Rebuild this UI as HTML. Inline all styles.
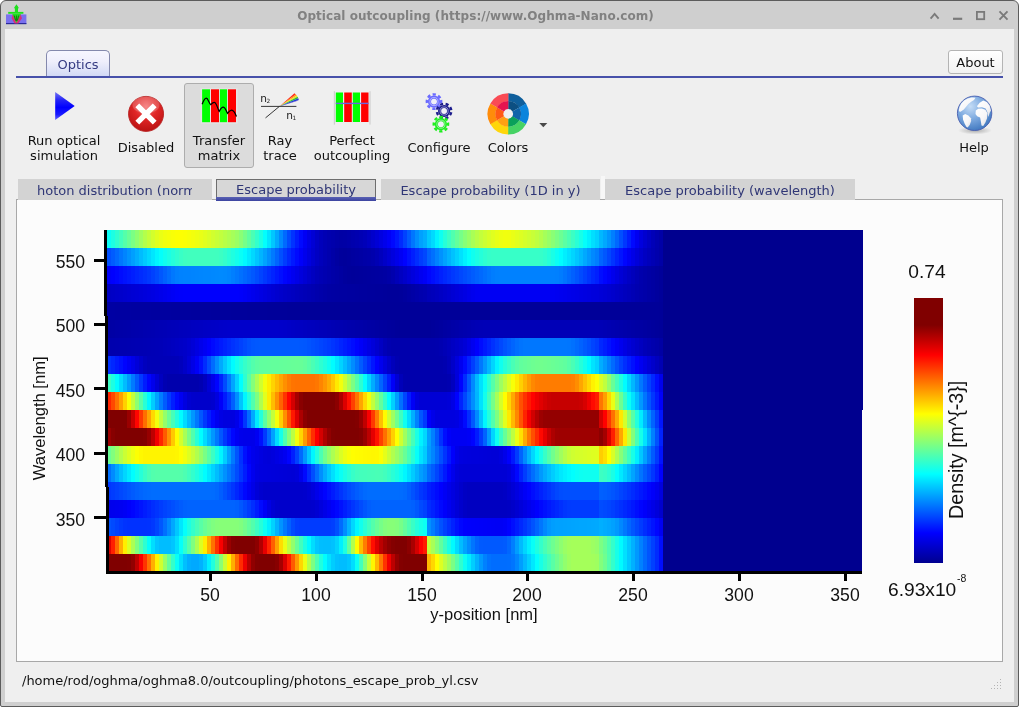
<!DOCTYPE html>
<html><head><meta charset="utf-8"><title>Optical outcoupling</title>
<style>
html,body{margin:0;padding:0}
body{width:1019px;height:707px;position:relative;overflow:hidden;background:#fff;font-family:"DejaVu Sans","Liberation Sans",sans-serif;font-size:13px;color:#111}
.abs{position:absolute}
#win{position:absolute;left:0;top:0;width:1017px;height:705px;border:1px solid #5c5c5c;border-radius:6px 6px 2px 2px;background:#cfcfcf;overflow:hidden}
#content{position:absolute;left:5px;top:29px;width:1009px;height:673px;background:#efefef}
#title{position:absolute;left:0;width:951px;top:8px;letter-spacing:0.05px;text-align:center;font-weight:bold;font-size:12px;color:#818181;line-height:16px;white-space:nowrap}
.tbl{position:absolute;text-align:center;line-height:15px;white-space:nowrap;color:#111}
.tab{position:absolute;top:179px;height:21px;background:#d3d3d3;color:#2f3676;line-height:23px;white-space:nowrap;overflow:hidden}
.hr{position:absolute;left:107px;width:756px;height:18px}
.pl{position:absolute;font-family:"Liberation Sans",sans-serif;color:#111;white-space:nowrap;line-height:1}
.tk{position:absolute;background:#000}
#all{position:absolute;left:0;top:0;width:1019px;height:707px;will-change:transform}
</style></head><body><div id="all">
<div id="win"></div>
<div class="abs" style="left:5px;top:29px;width:1009px;height:673px;background:#efefef"></div>
<!-- app icon -->
<svg class="abs" style="left:4px;top:2px" width="26" height="26" viewBox="0 0 26 26">
<rect x="2" y="12.4" width="20.4" height="9.6" fill="#7a70ee"/>
<rect x="2" y="21" width="20.4" height="1.2" fill="#2a2a9a"/>
<path d="M8.6 12.6 L7.6 16.2 L10.5 21.6 L14.3 21.6 L18 16.2 L16.6 12.6 Z" fill="#d8307a"/>
<path d="M8.4 11.9 L16.8 11.9 L12.4 20.9 Z" fill="#1ee01e"/>
<path d="M10.2 13.5 L11.6 18.5 M12.4 13.5 L12.4 19 M14.6 13.5 L13.4 18.5" stroke="#0a5a0a" stroke-width="0.8" fill="none"/>
<rect x="4.2" y="9.9" width="15.2" height="1.9" fill="#1ee01e"/>
<rect x="10.9" y="4.5" width="3.1" height="6" fill="#1ee01e"/>
<path d="M9.9 6.2 L12.45 2.2 L15 6.2 Z" fill="#1ee01e"/>
</svg>
<div id="title">Optical outcoupling (https://www.Oghma-Nano.com)</div>
<!-- window buttons -->
<svg class="abs" style="left:925px;top:5px" width="90" height="20" viewBox="0 0 90 20">
<g fill="none" stroke="#7a7a7a" stroke-width="1.9">
<path d="M5.6 13.6 L9.6 9 L13.6 13.6"/>
<path d="M28 13.8 L37.2 13.8" stroke-width="2.2"/>
<rect x="51.9" y="6.9" width="7.3" height="7.3" stroke-width="1.8"/>
<path d="M74.5 6.4 L82.5 14.6 M82.5 6.4 L74.5 14.6"/>
</g></svg>
<!-- ribbon tab -->
<div class="abs" style="left:46px;top:50px;width:62px;height:26px;border:1px solid #8489ad;border-bottom:none;border-radius:5px 5px 0 0;background:linear-gradient(#f6f6ff 0%,#efeffc 40%,#d0d8f4 100%);color:#353b82;text-align:center;line-height:27px">Optics</div>
<div class="abs" style="left:16px;top:76px;width:987px;height:2px;background:#4751aa"></div>
<!-- About -->
<div class="abs" style="left:948px;top:50px;width:53px;height:22px;border:1px solid #b4b4b4;border-radius:3px;background:linear-gradient(#ffffff,#f1f1f1);text-align:center;line-height:23px;color:#111">About</div>
<!-- toolbar -->
<svg class="abs" style="left:50px;top:86px" width="30" height="40" viewBox="0 0 30 40">
<defs><linearGradient id="pg" x1="0" y1="0" x2="0" y2="1"><stop offset="0" stop-color="#7474f2"/><stop offset="0.3" stop-color="#2222f6"/><stop offset="0.55" stop-color="#0000ff"/><stop offset="0.8" stop-color="#1a1aff"/><stop offset="1" stop-color="#6464ff"/></linearGradient></defs>
<path d="M5.2 5.9 L24.7 20 L5.2 34.1 Z" fill="url(#pg)"/></svg>
<div class="tbl" style="left:14px;top:133px;width:100px">Run optical<br>simulation</div>
<svg class="abs" style="left:124px;top:92px" width="44" height="44" viewBox="0 0 44 44">
<defs><radialGradient id="rg" cx="0.5" cy="0.3" r="0.75"><stop offset="0" stop-color="#f46a6a"/><stop offset="0.45" stop-color="#e02626"/><stop offset="1" stop-color="#b40f0f"/></radialGradient></defs>
<circle cx="22.05" cy="21.9" r="17.5" fill="url(#rg)" stroke="#b82222" stroke-width="0.9"/>
<ellipse cx="22" cy="13" rx="13.5" ry="8.5" fill="#ffffff" opacity="0.2"/>
<path d="M13.3 13.3 L30.7 30.7 M30.7 13.3 L13.3 30.7" stroke="#fff" stroke-width="5.4" fill="none"/></svg>
<div class="tbl" style="left:96px;top:140px;width:100px">Disabled</div>
<div class="abs" style="left:184px;top:83px;width:68px;height:83px;border:1px solid #adadad;border-radius:3px;background:#dcdcdc"></div>
<svg class="abs" style="left:198px;top:86px" width="42" height="40" viewBox="0 0 42 40">
<rect x="2.6" y="2.2" width="37" height="35.4" fill="#e4e4e4"/>
<rect x="4.1" y="3.3" width="7.9" height="32.9" fill="#00ff00"/><rect x="13" y="3.3" width="8" height="32.9" fill="#ff0000"/>
<rect x="21.9" y="3.3" width="7.2" height="32.9" fill="#00ff00"/><rect x="30" y="3.3" width="8" height="32.9" fill="#ff0000"/>
<path d="M4.1 18.3 C5.6 14.5 6.6 12.2 8.3 12.2 C10.2 12.2 10.8 17.6 12.8 18.7 C14 17.4 15 16.4 16.3 16.4 C18.6 16.4 19.6 23 21.2 25.4 C22.6 22.6 23.6 21.1 25.2 21.1 C27.4 21.1 28.2 25.6 29.6 27.4 C31 25.2 32.2 24.1 33.6 24.1 C36 24.1 37.4 27.6 38.5 30.5" fill="none" stroke="#000" stroke-width="1.2"/></svg>
<div class="tbl" style="left:169px;top:133px;width:100px">Transfer<br>matrix</div>
<!-- ray trace -->
<svg class="abs" style="left:256px;top:88px" width="46" height="36" viewBox="0 0 46 36">
<path d="M23.4 18.4 L38.5 5.2 L39.8 6.4 Z" fill="#ff2a1a"/><path d="M23.4 18.4 L39.8 6.4 L40.8 7.6 Z" fill="#ff9a10"/><path d="M23.4 18.4 L40.8 7.6 L41.6 8.8 Z" fill="#f0e61a"/><path d="M23.4 18.4 L41.6 8.8 L42.3 10.2 Z" fill="#2ec22e"/><path d="M23.4 18.4 L42.3 10.2 L42.8 12 Z" fill="#2040d8"/><path d="M23.4 18.4 L42.8 12 L41 13 Z" fill="#5a30c0"/>
<path d="M5 18.4 L40.4 18.4" stroke="#222" stroke-width="0.9"/><path d="M9.5 29.9 L23.4 18.4" stroke="#222" stroke-width="0.9"/>
<text x="4.3" y="14.4" font-family="DejaVu Sans,sans-serif" font-size="10.6" fill="#222">n</text><text x="10.4" y="14.9" font-family="DejaVu Sans,sans-serif" font-size="5.8" fill="#222">2</text>
<text x="30.2" y="30.9" font-family="DejaVu Sans,sans-serif" font-size="10.6" fill="#222">n</text><text x="36.6" y="31.6" font-family="DejaVu Sans,sans-serif" font-size="5.8" fill="#222">1</text></svg>
<div class="tbl" style="left:230px;top:133px;width:100px">Ray<br>trace</div>
<!-- perfect outcoupling -->
<svg class="abs" style="left:332px;top:88px" width="42" height="40" viewBox="0 0 42 40">
<rect x="1.8" y="3.2" width="1.2" height="33.4" fill="#cfcfcf"/><rect x="37.4" y="3.2" width="1.2" height="33.4" fill="#cfcfcf"/>
<rect x="3.8" y="4.5" width="7.2" height="29.5" fill="#00ff00"/><rect x="12.2" y="4.5" width="7.6" height="29.5" fill="#ff0000"/>
<rect x="20.8" y="4.5" width="7.2" height="29.5" fill="#00ff00"/><rect x="29.1" y="4.5" width="7.4" height="29.5" fill="#ff0000"/>
<rect x="3.8" y="14.7" width="32.7" height="1.4" fill="#6a66e0"/></svg>
<div class="tbl" style="left:302px;top:133px;width:100px">Perfect<br>outcoupling</div>
<!-- configure -->
<svg class="abs" style="left:420px;top:88px" width="40" height="48" viewBox="0 0 40 48"><g transform="translate(14.0 13.6)"><circle r="7.2" fill="none" stroke="#6a6aff" stroke-width="2.4" stroke-dasharray="3.17 2.49" transform="rotate(-12.60)"/><circle r="6.1" fill="#6a6aff"/><circle r="4.05" fill="none" stroke="#eeeeff" stroke-width="0.55"/><circle r="2.95" fill="#f0f0f8"/></g><g transform="translate(24.1 23.0)"><circle r="7.2" fill="none" stroke="#1c1c8c" stroke-width="2.4" stroke-dasharray="3.17 2.49" transform="rotate(9.90)"/><circle r="6.1" fill="#1c1c8c"/><circle r="4.05" fill="none" stroke="#eeeeff" stroke-width="0.55"/><circle r="2.95" fill="#f0f0f8"/></g><g transform="translate(20.9 36.2)"><circle r="7.2" fill="none" stroke="#1eee1e" stroke-width="2.4" stroke-dasharray="3.17 2.49" transform="rotate(-12.60)"/><circle r="6.1" fill="#1eee1e"/><circle r="4.05" fill="none" stroke="#eeeeff" stroke-width="0.55"/><circle r="2.95" fill="#f0f0f8"/></g></svg>
<div class="tbl" style="left:389px;top:140px;width:100px">Configure</div>
<!-- colors -->
<svg class="abs" style="left:484px;top:90px" width="70" height="48" viewBox="0 0 70 48"><path d="M24.20 3.30 A20.6 20.6 0 0 1 42.13 13.76 L35.17 17.70 A12.6 12.6 0 0 0 24.20 11.30 Z" fill="#0f5f9c"/><path d="M24.20 11.10 A12.8 12.8 0 0 1 35.34 17.60 L28.46 21.49 A4.9 4.9 0 0 0 24.20 19.00 Z" fill="#0c4f82"/><path d="M42.04 13.60 A20.6 20.6 0 0 1 41.95 34.36 L35.06 30.29 A12.6 12.6 0 0 0 35.11 17.60 Z" fill="#0a84dc"/><path d="M35.29 17.50 A12.8 12.8 0 0 1 35.23 30.40 L28.42 26.39 A4.9 4.9 0 0 0 28.44 21.45 Z" fill="#0f64aa"/><path d="M42.04 34.20 A20.6 20.6 0 0 1 24.02 44.50 L24.09 36.50 A12.6 12.6 0 0 0 35.11 30.20 Z" fill="#46d264"/><path d="M35.29 30.30 A12.8 12.8 0 0 1 24.09 36.70 L24.16 28.80 A4.9 4.9 0 0 0 28.44 26.35 Z" fill="#0aa05a"/><path d="M24.20 44.50 A20.6 20.6 0 0 1 6.27 34.04 L13.23 30.10 A12.6 12.6 0 0 0 24.20 36.50 Z" fill="#ffd60a"/><path d="M24.20 36.70 A12.8 12.8 0 0 1 13.06 30.20 L19.94 26.31 A4.9 4.9 0 0 0 24.20 28.80 Z" fill="#ffa014"/><path d="M6.36 34.20 A20.6 20.6 0 0 1 6.45 13.44 L13.34 17.51 A12.6 12.6 0 0 0 13.29 30.20 Z" fill="#ff8c0a"/><path d="M13.11 30.30 A12.8 12.8 0 0 1 13.17 17.40 L19.98 21.41 A4.9 4.9 0 0 0 19.96 26.35 Z" fill="#ff5a14"/><path d="M6.36 13.60 A20.6 20.6 0 0 1 24.38 3.30 L24.31 11.30 A12.6 12.6 0 0 0 13.29 17.60 Z" fill="#fa4b55"/><path d="M13.11 17.50 A12.8 12.8 0 0 1 24.31 11.10 L24.24 19.00 A4.9 4.9 0 0 0 19.96 21.45 Z" fill="#e6144f"/><path d="M55.3 33 L63.3 33 L59.3 37.2 Z" fill="#4a4a4a"/></svg>
<div class="tbl" style="left:458px;top:140px;width:100px">Colors</div>
<!-- help -->
<svg class="abs" style="left:950px;top:90px" width="50" height="50" viewBox="0 0 50 50">
<defs><radialGradient id="gg" cx="0.38" cy="0.3" r="0.8"><stop offset="0" stop-color="#c4dcf6"/><stop offset="0.45" stop-color="#7fabe0"/><stop offset="1" stop-color="#356fba"/></radialGradient>
<radialGradient id="sh" cx="0.5" cy="0.5" r="0.5"><stop offset="0" stop-color="#000" stop-opacity="0.28"/><stop offset="1" stop-color="#000" stop-opacity="0"/></radialGradient>
<linearGradient id="wl" x1="0" y1="0" x2="1" y2="1"><stop offset="0" stop-color="#ffffff"/><stop offset="0.6" stop-color="#f6f6f8"/><stop offset="1" stop-color="#dcdce2"/></linearGradient></defs>
<ellipse cx="25" cy="40.5" rx="17" ry="4" fill="url(#sh)"/>
<circle cx="24.6" cy="23.3" r="17.2" fill="url(#gg)" stroke="#4a5fb0" stroke-width="0.9"/>
<g fill="url(#wl)">
<path d="M8.8 20.5 L9.5 17 L11.3 13.4 L14.1 10.6 L17.7 8.5 L21.9 7.4 L25.5 7.8 L24 9.9 L21.2 11.7 L18.4 14.1 L15.9 17 L13.8 19.4 L11.3 21.2 L9.9 21.9 Z"/>
<path d="M12.7 25.5 L15.2 24 L18.4 25.5 L20.9 28.3 L21.2 31.1 L19.8 34.7 L17.7 37.5 L16.3 36.8 L14.5 33.2 L13.1 29.7 Z"/>
<path d="M25.8 20.5 L28.3 18.7 L31.8 18.4 L35.4 19.8 L37.5 23.3 L37.1 28.3 L35.4 32.5 L33.2 36.1 L31.5 35.4 L30.8 31.1 L30.1 27.6 L27.2 26.2 L25.5 24 Z"/>
<path d="M26.9 16.3 L29.7 12.7 L33.2 10.6 L36.8 12 L39.6 15.6 L41 20.5 L39.8 22.6 L38.4 27 L37.3 22 L35.6 18.6 L32 17.2 L28.3 17.5 Z"/>
</g>
</svg>
<div class="tbl" style="left:924px;top:140px;width:100px">Help</div>
<!-- pane -->
<div class="abs" style="left:16px;top:199px;width:985px;height:461px;border:1px solid #a8a8a8;background:#fcfcfc"></div>
<div class="abs" style="left:601px;top:176px;width:4px;height:23px;background:#f7f7f7"></div>
<!-- tabs -->
<div class="tab" style="left:18px;width:194px"><span style="position:absolute;left:19px;width:155px;overflow:hidden;top:0">hoton distribution (norm</span></div>
<div class="tab" style="left:216px;width:158px;height:17px;border:1px solid #6e6e6e;border-bottom:none;background:#d7d7d7;text-align:center;line-height:19px">Escape probability</div>
<div class="abs" style="left:216px;top:197px;width:160px;height:4px;background:linear-gradient(#5a62b4,#3c44a0)"></div>
<div class="tab" style="left:381px;width:219px;text-align:center">Escape probability (1D in y)</div>
<div class="tab" style="left:605px;width:250px;text-align:center">Escape probability (wavelength)</div>
<div class="hr" style="top:230px;background:linear-gradient(90deg,#0afff5 0 4px,#1cffe3 0 8px,#2fffd0 0 12px,#42ffbd 0 16px,#55ffaa 0 20px,#68ff97 0 24px,#7bff84 0 28px,#8eff71 0 32px,#a1ff5e 0 36px,#b4ff4b 0 40px,#c4ff3b 0 44px,#d3ff2c 0 48px,#e0ff1f 0 52px,#eaff15 0 56px,#f1ff0e 0 60px,#f5ff0a 0 64px,#f9ff06 0 68px,#fcff03 0 72px,#fdff02 0 76px,#fbff04 0 80px,#f7ff08 0 84px,#f3ff0c 0 88px,#eeff11 0 92px,#e9ff16 0 96px,#e2ff1d 0 100px,#daff25 0 104px,#d1ff2e 0 108px,#c9ff36 0 112px,#c1ff3e 0 116px,#b8ff47 0 120px,#afff50 0 124px,#a6ff59 0 128px,#9bff64 0 132px,#8aff75 0 136px,#76ff89 0 140px,#60ff9f 0 144px,#4affb5 0 148px,#33ffcc 0 152px,#1cffe3 0 156px,#02fffd 0 160px,#00e5ff 0 164px,#00c7ff 0 168px,#00a9ff 0 172px,#0089ff 0 176px,#006aff 0 180px,#004cff 0 184px,#0032ff 0 188px,#001cff 0 192px,#0009ff 0 196px,#0000f5 0 200px,#0000e4 0 204px,#0000d5 0 208px,#0000c6 0 212px,#0000bb 0 216px,#0000b4 0 220px,#0000af 0 224px,#0000ac 0 228px,#0000a8 0 232px,#0000a5 0 236px,#0000a6 0 240px,#0000a9 0 244px,#0000ad 0 248px,#0000b0 0 252px,#0000b4 0 256px,#0000b9 0 260px,#0000c2 0 264px,#0000cc 0 268px,#0000d6 0 272px,#0000e1 0 276px,#0000ec 0 280px,#0000f8 0 284px,#0008ff 0 288px,#0017ff 0 292px,#002aff 0 296px,#0042ff 0 300px,#005cff 0 304px,#0076ff 0 308px,#008dff 0 312px,#00a1ff 0 316px,#00adff 0 320px,#00c8ff 0 324px,#00daff 0 328px,#00f3ff 0 332px,#0efff1 0 336px,#26ffd9 0 340px,#3cffc3 0 344px,#50ffaf 0 348px,#64ff9b 0 352px,#76ff89 0 356px,#88ff77 0 360px,#98ff67 0 364px,#a9ff56 0 368px,#b7ff48 0 372px,#c3ff3c 0 376px,#cdff32 0 380px,#d7ff28 0 384px,#e0ff1f 0 388px,#e8ff17 0 392px,#eeff11 0 396px,#f1ff0e 0 400px,#f0ff0f 0 404px,#eaff15 0 408px,#e3ff1c 0 412px,#ddff22 0 416px,#d6ff29 0 420px,#cfff30 0 424px,#c8ff37 0 428px,#bfff40 0 432px,#b3ff4c 0 436px,#a5ff5a 0 440px,#98ff67 0 444px,#8aff75 0 448px,#7bff84 0 452px,#6cff93 0 456px,#5cffa3 0 460px,#4cffb3 0 464px,#3bffc4 0 468px,#29ffd6 0 472px,#17ffe8 0 476px,#04fffb 0 480px,#00f1ff 0 484px,#00dfff 0 488px,#00d2ff 0 492px,#00b8ff 0 496px,#00a8ff 0 500px,#0095ff 0 504px,#007fff 0 508px,#0068ff 0 512px,#004fff 0 516px,#0037ff 0 520px,#001fff 0 524px,#0008ff 0 528px,#0000f1 0 532px,#0000de 0 536px,#0000d0 0 540px,#0000c4 0 544px,#0000b8 0 548px,#0000af 0 552px,#0000a7 0 556px,#00008f 0 756px)"></div>
<div class="hr" style="top:248px;background:linear-gradient(90deg,#0050ff 0 4px,#005cff 0 8px,#0069ff 0 12px,#0077ff 0 16px,#0084ff 0 20px,#0092ff 0 24px,#009fff 0 28px,#00adff 0 32px,#00bcff 0 36px,#00caff 0 40px,#00d8ff 0 44px,#00e6ff 0 48px,#00f5ff 0 52px,#04fffb 0 56px,#10ffef 0 60px,#1bffe4 0 64px,#25ffda 0 68px,#2fffd0 0 72px,#39ffc6 0 76px,#3fffc0 0 80px,#41ffbe 0 108px,#40ffbf 0 112px,#3cffc3 0 116px,#34ffcb 0 120px,#29ffd6 0 124px,#1fffe0 0 128px,#14ffeb 0 132px,#09fff6 0 136px,#00faff 0 140px,#00e9ff 0 144px,#00d8ff 0 148px,#00c6ff 0 152px,#00b5ff 0 156px,#00a3ff 0 160px,#008fff 0 164px,#007aff 0 168px,#0065ff 0 172px,#0050ff 0 176px,#003cff 0 180px,#0029ff 0 184px,#0018ff 0 188px,#000aff 0 192px,#0000fa 0 196px,#0000ec 0 200px,#0000de 0 204px,#0000d0 0 208px,#0000c4 0 212px,#0000bb 0 216px,#0000b4 0 220px,#0000ae 0 224px,#0000a7 0 228px,#0000a1 0 232px,#00009c 0 236px,#00009b 0 240px,#00009d 0 244px,#0000a0 0 248px,#0000a2 0 252px,#0000a4 0 256px,#0000a7 0 260px,#0000a9 0 264px,#0000ad 0 268px,#0000b4 0 272px,#0000bd 0 276px,#0000c8 0 280px,#0000d3 0 284px,#0000de 0 288px,#0000e9 0 292px,#0000f4 0 296px,#0002ff 0 300px,#0010ff 0 304px,#001eff 0 308px,#002dff 0 312px,#003cff 0 316px,#0047ff 0 320px,#0062ff 0 324px,#0070ff 0 328px,#0082ff 0 332px,#0092ff 0 336px,#00a2ff 0 340px,#00b2ff 0 344px,#00c2ff 0 348px,#00d1ff 0 352px,#00e1ff 0 356px,#00f1ff 0 360px,#02fffd 0 364px,#10ffef 0 368px,#1bffe4 0 372px,#25ffda 0 376px,#2effd1 0 380px,#35ffca 0 384px,#37ffc8 0 432px,#36ffc9 0 436px,#30ffcf 0 440px,#26ffd9 0 444px,#19ffe6 0 448px,#0bfff4 0 452px,#00fdff 0 456px,#00efff 0 460px,#00e2ff 0 464px,#00d5ff 0 468px,#00c7ff 0 472px,#00b9ff 0 476px,#00a9ff 0 480px,#0099ff 0 484px,#0089ff 0 488px,#007eff 0 492px,#0065ff 0 496px,#0057ff 0 500px,#0046ff 0 504px,#0034ff 0 508px,#0023ff 0 512px,#0014ff 0 516px,#0005ff 0 520px,#0000f5 0 524px,#0000e7 0 528px,#0000da 0 532px,#0000ce 0 536px,#0000c3 0 540px,#0000bb 0 544px,#0000b4 0 548px,#0000ad 0 552px,#0000a6 0 556px,#00008f 0 756px)"></div>
<div class="hr" style="top:266px;background:linear-gradient(90deg,#0000f8 0 4px,#0000fe 0 8px,#0005ff 0 12px,#000cff 0 16px,#0012ff 0 20px,#0018ff 0 24px,#001eff 0 28px,#0025ff 0 32px,#002bff 0 36px,#0031ff 0 40px,#0038ff 0 44px,#0041ff 0 48px,#004bff 0 52px,#0057ff 0 56px,#0062ff 0 60px,#006dff 0 64px,#0078ff 0 68px,#007fff 0 72px,#0082ff 0 76px,#0083ff 0 84px,#0084ff 0 88px,#0085ff 0 92px,#0086ff 0 96px,#0087ff 0 104px,#0088ff 0 108px,#0089ff 0 112px,#008aff 0 116px,#0089ff 0 120px,#0086ff 0 124px,#007fff 0 128px,#0078ff 0 132px,#0070ff 0 136px,#0068ff 0 140px,#0060ff 0 144px,#0058ff 0 148px,#004eff 0 152px,#0043ff 0 156px,#0038ff 0 160px,#002dff 0 164px,#0023ff 0 168px,#0018ff 0 172px,#000eff 0 176px,#0004ff 0 180px,#0000fa 0 184px,#0000f0 0 188px,#0000e7 0 192px,#0000dd 0 196px,#0000d4 0 200px,#0000ca 0 204px,#0000c1 0 208px,#0000b9 0 212px,#0000b4 0 216px,#0000b0 0 220px,#0000ac 0 224px,#0000a8 0 228px,#0000a5 0 232px,#0000a1 0 236px,#00009d 0 240px,#00009b 0 244px,#00009a 0 248px,#00009b 0 252px,#00009c 0 256px,#00009d 0 260px,#00009e 0 264px,#00009f 0 268px,#0000a0 0 272px,#0000a1 0 276px,#0000a3 0 280px,#0000a7 0 284px,#0000ae 0 288px,#0000b8 0 292px,#0000c1 0 296px,#0000ca 0 300px,#0000d4 0 304px,#0000dd 0 308px,#0000e6 0 312px,#0000f0 0 316px,#0000f7 0 320px,#0006ff 0 324px,#000eff 0 328px,#0017ff 0 332px,#0020ff 0 336px,#0028ff 0 340px,#0030ff 0 344px,#0038ff 0 348px,#003fff 0 352px,#0047ff 0 356px,#004eff 0 360px,#0055ff 0 364px,#005cff 0 368px,#0063ff 0 372px,#0069ff 0 376px,#0070ff 0 380px,#0077ff 0 384px,#007dff 0 388px,#0080ff 0 392px,#0081ff 0 448px,#0080ff 0 452px,#007cff 0 456px,#0074ff 0 460px,#006aff 0 464px,#0060ff 0 468px,#0056ff 0 472px,#004bff 0 476px,#0040ff 0 480px,#0034ff 0 484px,#0028ff 0 488px,#001fff 0 492px,#000dff 0 496px,#0004ff 0 500px,#0000f8 0 504px,#0000ec 0 508px,#0000e1 0 512px,#0000d6 0 516px,#0000cd 0 520px,#0000c4 0 524px,#0000bc 0 528px,#0000b4 0 532px,#0000ad 0 536px,#0000a9 0 540px,#0000a5 0 544px,#0000a2 0 548px,#00009e 0 552px,#00009a 0 556px,#00008f 0 756px)"></div>
<div class="hr" style="top:284px;background:linear-gradient(90deg,#0000c3 0 4px,#0000c6 0 8px,#0000c9 0 12px,#0000cb 0 16px,#0000ce 0 20px,#0000d1 0 24px,#0000d4 0 28px,#0000d6 0 32px,#0000d9 0 36px,#0000dc 0 40px,#0000df 0 44px,#0000e2 0 48px,#0000e6 0 52px,#0000ea 0 56px,#0000ee 0 60px,#0000f2 0 64px,#0000f6 0 68px,#0000fa 0 72px,#0000fc 0 76px,#0000fd 0 132px,#0000fb 0 136px,#0000f7 0 140px,#0000f2 0 144px,#0000ed 0 148px,#0000e8 0 152px,#0000e3 0 156px,#0000de 0 160px,#0000d9 0 164px,#0000d4 0 168px,#0000cf 0 172px,#0000cb 0 176px,#0000c7 0 180px,#0000c4 0 184px,#0000c1 0 188px,#0000bd 0 192px,#0000ba 0 196px,#0000b7 0 200px,#0000b4 0 204px,#0000b1 0 208px,#0000ad 0 212px,#0000aa 0 216px,#0000a7 0 220px,#0000a4 0 224px,#0000a3 0 228px,#0000a2 0 232px,#0000a1 0 240px,#0000a0 0 248px,#00009f 0 252px,#00009e 0 260px,#00009d 0 268px,#00009c 0 276px,#00009b 0 280px,#00009a 0 292px,#00009b 0 296px,#00009e 0 300px,#0000a2 0 304px,#0000a6 0 308px,#0000aa 0 312px,#0000ae 0 316px,#0000b1 0 320px,#0000b8 0 324px,#0000bb 0 328px,#0000bf 0 332px,#0000c4 0 336px,#0000c9 0 340px,#0000ce 0 344px,#0000d4 0 348px,#0000d9 0 352px,#0000de 0 356px,#0000e3 0 360px,#0000e9 0 364px,#0000ee 0 368px,#0000f2 0 372px,#0000f3 0 448px,#0000f1 0 452px,#0000ef 0 456px,#0000ed 0 460px,#0000ea 0 464px,#0000e8 0 468px,#0000e6 0 472px,#0000e3 0 476px,#0000e1 0 480px,#0000df 0 484px,#0000dc 0 488px,#0000db 0 492px,#0000d7 0 496px,#0000d4 0 500px,#0000d0 0 504px,#0000cc 0 508px,#0000c7 0 512px,#0000c3 0 516px,#0000be 0 520px,#0000ba 0 524px,#0000b5 0 528px,#0000b0 0 532px,#0000ac 0 536px,#0000a9 0 540px,#0000a5 0 544px,#0000a2 0 548px,#00009e 0 552px,#00009a 0 556px,#00008f 0 756px)"></div>
<div class="hr" style="top:302px;background:linear-gradient(90deg,#0000a3 0 8px,#0000a2 0 24px,#0000a1 0 44px,#0000a0 0 64px,#00009f 0 84px,#00009e 0 104px,#00009d 0 124px,#00009c 0 140px,#00009b 0 160px,#00009a 0 180px,#000099 0 552px,#000098 0 556px,#00008f 0 756px)"></div>
<div class="hr" style="top:320px;background:linear-gradient(90deg,#0000a4 0 4px,#0000a5 0 8px,#0000a7 0 12px,#0000a8 0 16px,#0000a9 0 20px,#0000aa 0 24px,#0000ac 0 28px,#0000ad 0 32px,#0000ae 0 36px,#0000b0 0 40px,#0000b1 0 44px,#0000b2 0 48px,#0000b4 0 52px,#0000b5 0 56px,#0000b6 0 60px,#0000b8 0 64px,#0000b9 0 68px,#0000ba 0 72px,#0000bc 0 76px,#0000bd 0 80px,#0000be 0 84px,#0000c0 0 88px,#0000c1 0 92px,#0000c2 0 96px,#0000c4 0 100px,#0000c5 0 104px,#0000c6 0 108px,#0000c7 0 112px,#0000c9 0 116px,#0000ca 0 120px,#0000cb 0 172px,#0000ca 0 176px,#0000c9 0 180px,#0000c7 0 184px,#0000c5 0 188px,#0000c3 0 192px,#0000c2 0 196px,#0000c0 0 200px,#0000be 0 204px,#0000bd 0 208px,#0000bb 0 212px,#0000b9 0 216px,#0000b8 0 220px,#0000b6 0 224px,#0000b4 0 228px,#0000b2 0 232px,#0000b1 0 236px,#0000af 0 240px,#0000ad 0 244px,#0000ac 0 248px,#0000aa 0 252px,#0000a9 0 256px,#0000a7 0 260px,#0000a5 0 264px,#0000a4 0 268px,#0000a2 0 272px,#0000a0 0 276px,#00009f 0 280px,#00009d 0 284px,#00009c 0 288px,#00009a 0 292px,#000099 0 324px,#00009b 0 328px,#00009d 0 332px,#00009f 0 336px,#0000a2 0 340px,#0000a4 0 344px,#0000a7 0 348px,#0000a9 0 352px,#0000ac 0 356px,#0000ae 0 360px,#0000b0 0 364px,#0000b3 0 368px,#0000b5 0 372px,#0000b6 0 376px,#0000b7 0 492px,#0000b6 0 496px,#0000b4 0 500px,#0000b2 0 504px,#0000b0 0 508px,#0000ae 0 512px,#0000ac 0 516px,#0000aa 0 520px,#0000a8 0 524px,#0000a6 0 528px,#0000a4 0 532px,#0000a3 0 536px,#0000a1 0 540px,#00009f 0 544px,#00009d 0 548px,#00009b 0 552px,#000099 0 556px,#00008f 0 756px)"></div>
<div class="hr" style="top:338px;background:linear-gradient(90deg,#0000ae 0 8px,#0000af 0 12px,#0000b0 0 20px,#0000b1 0 24px,#0000b2 0 28px,#0000b3 0 36px,#0000b4 0 40px,#0000b5 0 44px,#0000b6 0 48px,#0000b7 0 52px,#0000b8 0 56px,#0000bb 0 60px,#0000bd 0 64px,#0000c0 0 68px,#0000c3 0 72px,#0000c6 0 76px,#0000c9 0 80px,#0000cf 0 84px,#0000d7 0 88px,#0000e1 0 92px,#0000eb 0 96px,#0000f4 0 100px,#0000fe 0 104px,#0009ff 0 108px,#0012ff 0 112px,#001aff 0 116px,#0022ff 0 120px,#002aff 0 124px,#0032ff 0 128px,#0039ff 0 132px,#0041ff 0 136px,#0049ff 0 140px,#0051ff 0 144px,#0056ff 0 148px,#0058ff 0 152px,#0059ff 0 192px,#0058ff 0 196px,#0057ff 0 200px,#0053ff 0 204px,#004eff 0 208px,#004aff 0 212px,#0045ff 0 216px,#0040ff 0 220px,#003bff 0 224px,#0034ff 0 228px,#002dff 0 232px,#0024ff 0 236px,#001cff 0 240px,#0014ff 0 244px,#000cff 0 248px,#0003ff 0 252px,#0000f8 0 256px,#0000ee 0 260px,#0000e4 0 264px,#0000da 0 268px,#0000cf 0 272px,#0000c3 0 276px,#0000b7 0 280px,#0000b0 0 284px,#0000ad 0 328px,#0000ae 0 332px,#0000b1 0 336px,#0000b6 0 340px,#0000bc 0 344px,#0000c3 0 348px,#0000c9 0 352px,#0000cf 0 356px,#0000d7 0 360px,#0000e3 0 364px,#0000f0 0 368px,#0000fd 0 372px,#000cff 0 376px,#0018ff 0 380px,#0024ff 0 384px,#0031ff 0 388px,#003dff 0 392px,#0048ff 0 396px,#0053ff 0 400px,#005cff 0 404px,#0065ff 0 408px,#006eff 0 412px,#0074ff 0 416px,#0077ff 0 460px,#0076ff 0 464px,#0071ff 0 468px,#006aff 0 472px,#0062ff 0 476px,#0059ff 0 480px,#0050ff 0 484px,#0044ff 0 488px,#003bff 0 492px,#0027ff 0 496px,#001dff 0 500px,#0011ff 0 504px,#0005ff 0 508px,#0000f9 0 512px,#0000ee 0 516px,#0000e3 0 520px,#0000d9 0 524px,#0000d0 0 528px,#0000c8 0 532px,#0000c0 0 536px,#0000b8 0 540px,#0000b3 0 544px,#0000ae 0 548px,#0000aa 0 552px,#0000a4 0 556px,#00008f 0 756px)"></div>
<div class="hr" style="top:356px;background:linear-gradient(90deg,#0031ff 0 4px,#0026ff 0 8px,#001aff 0 12px,#000fff 0 16px,#0003ff 0 20px,#0000f5 0 24px,#0000e8 0 28px,#0000d9 0 32px,#0000ca 0 36px,#0000be 0 40px,#0000b8 0 44px,#0000b7 0 68px,#0000b8 0 72px,#0000bd 0 76px,#0000c8 0 80px,#0000d6 0 84px,#0000e6 0 88px,#0000f8 0 92px,#0010ff 0 96px,#002cff 0 100px,#004cff 0 104px,#006cff 0 108px,#008cff 0 112px,#00aaff 0 116px,#00c7ff 0 120px,#00e3ff 0 124px,#00fcff 0 128px,#12ffed 0 132px,#24ffdb 0 136px,#36ffc9 0 140px,#45ffba 0 144px,#53ffac 0 148px,#5cffa3 0 152px,#60ff9f 0 156px,#61ff9e 0 160px,#62ff9d 0 164px,#63ff9c 0 172px,#64ff9b 0 176px,#65ff9a 0 180px,#66ff99 0 184px,#67ff98 0 188px,#68ff97 0 192px,#67ff98 0 196px,#62ff9d 0 200px,#58ffa7 0 204px,#4affb5 0 208px,#3cffc3 0 212px,#2effd1 0 216px,#20ffdf 0 220px,#10ffef 0 224px,#00fdff 0 228px,#00e8ff 0 232px,#00d3ff 0 236px,#00bcff 0 240px,#00a4ff 0 244px,#008cff 0 248px,#0073ff 0 252px,#005bff 0 256px,#0043ff 0 260px,#002cff 0 264px,#0015ff 0 268px,#0001ff 0 272px,#0000ee 0 276px,#0000dc 0 280px,#0000cb 0 284px,#0000bb 0 288px,#0000b1 0 292px,#0000ad 0 336px,#0000b0 0 340px,#0000b9 0 344px,#0000c9 0 348px,#0000dc 0 352px,#0000f0 0 356px,#0009ff 0 360px,#0023ff 0 364px,#003eff 0 368px,#005aff 0 372px,#0078ff 0 376px,#0097ff 0 380px,#00b6ff 0 384px,#00d5ff 0 388px,#00f4ff 0 392px,#10ffef 0 396px,#25ffda 0 400px,#37ffc8 0 404px,#49ffb6 0 408px,#57ffa8 0 412px,#61ff9e 0 416px,#65ff9a 0 420px,#69ff96 0 424px,#6dff92 0 428px,#70ff8f 0 432px,#71ff8e 0 436px,#6fff90 0 440px,#6dff92 0 444px,#6aff95 0 448px,#67ff98 0 452px,#64ff9b 0 456px,#60ff9f 0 460px,#57ffa8 0 464px,#49ffb6 0 468px,#37ffc8 0 472px,#25ffda 0 476px,#12ffed 0 480px,#00fbff 0 484px,#00e3ff 0 488px,#00d3ff 0 492px,#00adff 0 496px,#0099ff 0 500px,#0081ff 0 504px,#006aff 0 508px,#0054ff 0 512px,#0040ff 0 516px,#002eff 0 520px,#001eff 0 524px,#000fff 0 528px,#0000ff 0 532px,#0000f1 0 536px,#0000e4 0 540px,#0000d7 0 544px,#0000cb 0 548px,#0000bf 0 552px,#0000b3 0 556px,#00008f 0 756px)"></div>
<div class="hr" style="top:374px;background:linear-gradient(90deg,#3bffc4 0 4px,#1dffe2 0 8px,#00fdff 0 12px,#00ddff 0 16px,#00bdff 0 20px,#009cff 0 24px,#007aff 0 28px,#0059ff 0 32px,#0039ff 0 36px,#001cff 0 40px,#0004ff 0 44px,#0000ec 0 48px,#0000d5 0 52px,#0000c0 0 56px,#0000b2 0 60px,#0000ad 0 92px,#0000b2 0 96px,#0000bf 0 100px,#0000d4 0 104px,#0000ea 0 108px,#0003ff 0 112px,#0023ff 0 116px,#004bff 0 120px,#0079ff 0 124px,#00a6ff 0 128px,#00d3ff 0 132px,#01fffe 0 136px,#2effd1 0 140px,#5affa5 0 144px,#85ff7a 0 148px,#acff53 0 152px,#d1ff2e 0 156px,#f4ff0b 0 160px,#ffed00 0 164px,#ffd300 0 168px,#ffbb00 0 172px,#ffa500 0 176px,#ff9000 0 180px,#ff7e00 0 184px,#ff7400 0 188px,#ff7200 0 208px,#ff7700 0 212px,#ff8500 0 216px,#ff9700 0 220px,#ffad00 0 224px,#ffc800 0 228px,#ffe900 0 232px,#f2ff0d 0 236px,#cdff32 0 240px,#a5ff5a 0 244px,#7dff82 0 248px,#55ffaa 0 252px,#2cffd3 0 256px,#02fffd 0 260px,#00d5ff 0 264px,#00acff 0 268px,#0087ff 0 272px,#0065ff 0 276px,#0042ff 0 280px,#001eff 0 284px,#0000f8 0 288px,#0000d4 0 292px,#0000b9 0 296px,#0000ae 0 300px,#0000ad 0 340px,#0000b0 0 344px,#0000bf 0 348px,#0000db 0 352px,#0002ff 0 356px,#002bff 0 360px,#0059ff 0 364px,#008aff 0 368px,#00b9ff 0 372px,#00e1ff 0 376px,#08fff7 0 380px,#2effd1 0 384px,#55ffaa 0 388px,#7bff84 0 392px,#9eff61 0 396px,#bdff42 0 400px,#dcff23 0 404px,#f8ff07 0 408px,#ffea00 0 412px,#ffd000 0 416px,#ffb500 0 420px,#ff9c00 0 424px,#ff8800 0 428px,#ff7e00 0 432px,#ff7c00 0 464px,#ff8000 0 468px,#ff8e00 0 472px,#ffa600 0 476px,#ffc100 0 480px,#ffda00 0 484px,#fff200 0 488px,#fbff04 0 492px,#d8ff27 0 496px,#bfff40 0 500px,#95ff6a 0 504px,#68ff97 0 508px,#43ffbc 0 512px,#21ffde 0 516px,#00fdff 0 520px,#00d9ff 0 524px,#00b7ff 0 528px,#0097ff 0 532px,#0078ff 0 536px,#005bff 0 540px,#0040ff 0 544px,#0027ff 0 548px,#000dff 0 552px,#0000ed 0 556px,#00008f 0 756px)"></div>
<div class="hr" style="top:392px;background:linear-gradient(90deg,#ff2400 0 4px,#ff4900 0 8px,#ff7300 0 12px,#ffa000 0 16px,#ffd100 0 20px,#faff05 0 24px,#c4ff3b 0 28px,#8dff72 0 32px,#58ffa7 0 36px,#28ffd7 0 40px,#00f9ff 0 44px,#00ccff 0 48px,#00a3ff 0 52px,#007eff 0 56px,#005bff 0 60px,#003aff 0 64px,#001eff 0 68px,#0008ff 0 72px,#0000f3 0 76px,#0000e0 0 80px,#0000d1 0 84px,#0000cc 0 88px,#0000cb 0 104px,#0000cf 0 108px,#0000df 0 112px,#0000fa 0 116px,#001aff 0 120px,#003aff 0 124px,#0060ff 0 128px,#008fff 0 132px,#00c4ff 0 136px,#00f6ff 0 140px,#25ffda 0 144px,#51ffae 0 148px,#7eff81 0 152px,#afff50 0 156px,#e2ff1d 0 160px,#ffeb00 0 164px,#ffbd00 0 168px,#ff9100 0 172px,#ff6300 0 176px,#ff3300 0 180px,#ff0300 0 184px,#d30000 0 188px,#a70000 0 192px,#8a0000 0 196px,#800000 0 228px,#8c0000 0 232px,#ac0000 0 236px,#dc0000 0 240px,#ff0f00 0 244px,#ff4000 0 248px,#ff7200 0 252px,#ffa600 0 256px,#ffd800 0 260px,#f4ff0b 0 264px,#c3ff3c 0 268px,#93ff6c 0 272px,#63ff9c 0 276px,#33ffcc 0 280px,#02fffd 0 284px,#00d0ff 0 288px,#009fff 0 292px,#0070ff 0 296px,#0045ff 0 300px,#001cff 0 304px,#0000f6 0 308px,#0000de 0 312px,#0000d5 0 340px,#0000d8 0 344px,#0000e5 0 348px,#0001ff 0 352px,#0023ff 0 356px,#0046ff 0 360px,#006aff 0 364px,#008fff 0 368px,#00b6ff 0 372px,#00e2ff 0 376px,#13ffec 0 380px,#44ffbb 0 384px,#76ff89 0 388px,#a7ff58 0 392px,#d5ff2a 0 396px,#fffe00 0 400px,#ffd500 0 404px,#ffa900 0 408px,#ff7b00 0 412px,#ff5100 0 416px,#ff3200 0 420px,#ff1800 0 424px,#ff0200 0 428px,#ef0000 0 432px,#e10000 0 436px,#d40000 0 440px,#ca0000 0 444px,#c60000 0 472px,#ca0000 0 476px,#d70000 0 480px,#ee0000 0 484px,#ff0a00 0 488px,#ff1c00 0 492px,#ff7600 0 496px,#ff9f00 0 500px,#ffd600 0 504px,#ebff14 0 508px,#abff54 0 512px,#6eff91 0 516px,#37ffc8 0 520px,#09fff6 0 524px,#00e2ff 0 528px,#00bdff 0 532px,#0099ff 0 536px,#0075ff 0 540px,#0054ff 0 544px,#0036ff 0 548px,#001aff 0 552px,#0000fb 0 556px,#00008f 0 756px)"></div>
<div class="hr" style="top:410px;width:755px;background:linear-gradient(90deg,#800000 0 20px,#9a0000 0 24px,#ca0000 0 28px,#ff0400 0 32px,#ff3a00 0 36px,#ff6f00 0 40px,#ffa400 0 44px,#ffd900 0 48px,#f3ff0c 0 52px,#c3ff3c 0 56px,#95ff6a 0 60px,#6cff93 0 64px,#46ffb9 0 68px,#22ffdd 0 72px,#00fdff 0 76px,#00dbff 0 80px,#00b9ff 0 84px,#0097ff 0 88px,#0077ff 0 92px,#0057ff 0 96px,#0038ff 0 100px,#001dff 0 104px,#0006ff 0 108px,#0000f1 0 112px,#0000e4 0 116px,#0000df 0 128px,#0000ea 0 132px,#0008ff 0 136px,#0036ff 0 140px,#006cff 0 144px,#00a9ff 0 148px,#00e8ff 0 152px,#24ffdb 0 156px,#5cffa3 0 160px,#91ff6e 0 164px,#c3ff3c 0 168px,#f5ff0a 0 172px,#ffcf00 0 176px,#ff8f00 0 180px,#ff5100 0 184px,#ff1700 0 188px,#de0000 0 192px,#ac0000 0 196px,#8c0000 0 200px,#800000 0 248px,#830000 0 252px,#970000 0 256px,#c00000 0 260px,#f80000 0 264px,#ff3900 0 268px,#ff7c00 0 272px,#ffbf00 0 276px,#fffb00 0 280px,#ceff31 0 284px,#9fff60 0 288px,#6fff90 0 292px,#3fffc0 0 296px,#0ffff0 0 300px,#00deff 0 304px,#00afff 0 308px,#0081ff 0 312px,#0056ff 0 316px,#0038ff 0 320px,#0000fa 0 324px,#0000e9 0 328px,#0000df 0 348px,#0000e2 0 352px,#0000ef 0 356px,#000aff 0 360px,#002dff 0 364px,#0058ff 0 368px,#008aff 0 372px,#00c1ff 0 376px,#00f6ff 0 380px,#25ffda 0 384px,#51ffae 0 388px,#7eff81 0 392px,#afff50 0 396px,#e2ff1d 0 400px,#ffe900 0 404px,#ffb800 0 408px,#ff8700 0 412px,#ff5400 0 416px,#ff2200 0 420px,#f50000 0 424px,#d10000 0 428px,#b40000 0 432px,#9d0000 0 436px,#950000 0 440px,#940000 0 492px,#d50000 0 496px,#ff0000 0 500px,#ff3800 0 504px,#ff7100 0 508px,#ffaa00 0 512px,#ffe800 0 516px,#d2ff2d 0 520px,#8fff70 0 524px,#56ffa9 0 528px,#22ffdd 0 532px,#00ecff 0 536px,#00baff 0 540px,#008cff 0 544px,#0063ff 0 548px,#003dff 0 552px,#0015ff 0 556px,#00008f 0 756px)"></div>
<div class="hr" style="top:428px;width:755px;background:linear-gradient(90deg,#990000 0 4px,#870000 0 8px,#800000 0 36px,#830000 0 40px,#970000 0 44px,#be0000 0 48px,#f10000 0 52px,#ff2600 0 56px,#ff5b00 0 60px,#ff9200 0 64px,#ffc900 0 68px,#fffc00 0 72px,#d3ff2c 0 76px,#a8ff57 0 80px,#7cff83 0 84px,#50ffaf 0 88px,#26ffd9 0 92px,#00feff 0 96px,#00dbff 0 100px,#00b9ff 0 104px,#0097ff 0 108px,#0077ff 0 112px,#0057ff 0 116px,#0038ff 0 120px,#001dff 0 124px,#0006ff 0 128px,#0000f4 0 132px,#0000eb 0 136px,#0000e9 0 148px,#0000f3 0 152px,#000fff 0 156px,#0039ff 0 160px,#006bff 0 164px,#00a2ff 0 168px,#00dcff 0 172px,#16ffe9 0 176px,#4fffb0 0 180px,#86ff79 0 184px,#bbff44 0 188px,#f1ff0e 0 192px,#ffd500 0 196px,#ff9b00 0 200px,#ff6300 0 204px,#ff2e00 0 208px,#fd0000 0 212px,#d40000 0 216px,#ae0000 0 220px,#910000 0 224px,#820000 0 228px,#800000 0 252px,#850000 0 256px,#990000 0 260px,#bc0000 0 264px,#e50000 0 268px,#ff1200 0 272px,#ff4000 0 276px,#ff7000 0 280px,#ffa000 0 284px,#ffd000 0 288px,#feff01 0 292px,#ceff31 0 296px,#9fff60 0 300px,#72ff8d 0 304px,#46ffb9 0 308px,#1bffe4 0 312px,#00f2ff 0 316px,#00d7ff 0 320px,#00a0ff 0 324px,#0080ff 0 328px,#0059ff 0 332px,#0031ff 0 336px,#000eff 0 340px,#0000f9 0 344px,#0000f3 0 360px,#0000f6 0 364px,#0003ff 0 368px,#001bff 0 372px,#003bff 0 376px,#0063ff 0 380px,#009aff 0 384px,#00d6ff 0 388px,#0dfff2 0 392px,#3bffc4 0 396px,#67ff98 0 400px,#92ff6d 0 404px,#beff41 0 408px,#eaff15 0 412px,#ffe100 0 416px,#ffab00 0 420px,#ff7800 0 424px,#ff4e00 0 428px,#ff2a00 0 432px,#ff0800 0 436px,#e60000 0 440px,#c60000 0 444px,#ad0000 0 448px,#a00000 0 452px,#9e0000 0 492px,#8c0000 0 496px,#a50000 0 500px,#da0000 0 504px,#ff1f00 0 508px,#ff6500 0 512px,#ffa700 0 516px,#ffe900 0 520px,#c9ff36 0 524px,#83ff7c 0 528px,#48ffb7 0 532px,#16ffe9 0 536px,#00e3ff 0 540px,#00b1ff 0 544px,#007fff 0 548px,#0051ff 0 552px,#0022ff 0 556px,#00008f 0 756px)"></div>
<div class="hr" style="top:446px;width:755px;background:linear-gradient(90deg,#6aff95 0 4px,#81ff7e 0 8px,#9bff64 0 12px,#b4ff4b 0 16px,#cbff34 0 20px,#ddff22 0 24px,#eeff11 0 28px,#fcff03 0 32px,#fff800 0 36px,#fff400 0 68px,#fff600 0 72px,#fffe00 0 76px,#f1ff0e 0 80px,#ddff22 0 84px,#c8ff37 0 88px,#b0ff4f 0 92px,#96ff69 0 96px,#79ff86 0 100px,#5bffa4 0 104px,#3bffc4 0 108px,#1affe5 0 112px,#00f6ff 0 116px,#00ceff 0 120px,#00a3ff 0 124px,#007aff 0 128px,#0054ff 0 132px,#0031ff 0 136px,#0010ff 0 140px,#0000f8 0 144px,#0000ec 0 148px,#0000e6 0 152px,#0000e0 0 156px,#0000db 0 160px,#0000d9 0 164px,#0000dd 0 168px,#0000e3 0 172px,#0000e9 0 176px,#0000f1 0 180px,#0003ff 0 184px,#001eff 0 188px,#0041ff 0 192px,#0069ff 0 196px,#0097ff 0 200px,#00c8ff 0 204px,#00f7ff 0 208px,#22ffdd 0 212px,#4bffb4 0 216px,#71ff8e 0 220px,#91ff6e 0 224px,#acff53 0 228px,#c4ff3b 0 232px,#daff25 0 236px,#ecff13 0 240px,#f8ff07 0 244px,#fffe00 0 248px,#fffc00 0 252px,#fffb00 0 256px,#fff900 0 260px,#fff800 0 264px,#fff700 0 268px,#fff800 0 272px,#fbff04 0 276px,#e5ff1a 0 280px,#caff35 0 284px,#b1ff4e 0 288px,#9bff64 0 292px,#83ff7c 0 296px,#68ff97 0 300px,#49ffb6 0 304px,#28ffd7 0 308px,#06fff9 0 312px,#00e3ff 0 316px,#00ccff 0 320px,#009bff 0 324px,#0085ff 0 328px,#0069ff 0 332px,#004fff 0 336px,#0033ff 0 340px,#0018ff 0 344px,#0000fc 0 348px,#0000e8 0 352px,#0000df 0 356px,#0000dd 0 360px,#0000dc 0 364px,#0000db 0 372px,#0000da 0 376px,#0000d9 0 380px,#0000d8 0 384px,#0000d7 0 392px,#0000dd 0 396px,#0000ea 0 400px,#0000fd 0 404px,#0018ff 0 408px,#003bff 0 412px,#0063ff 0 416px,#008bff 0 420px,#00b3ff 0 424px,#00d8ff 0 428px,#00f9ff 0 432px,#1affe5 0 436px,#38ffc7 0 440px,#55ffaa 0 444px,#71ff8e 0 448px,#8aff75 0 452px,#a0ff5f 0 456px,#b4ff4b 0 460px,#c5ff3a 0 464px,#ceff31 0 468px,#d3ff2c 0 472px,#d5ff2a 0 476px,#d8ff27 0 480px,#dbff24 0 484px,#deff21 0 488px,#e0ff1f 0 492px,#ffce00 0 496px,#ffdf00 0 500px,#ffff00 0 504px,#d8ff27 0 508px,#afff50 0 512px,#88ff77 0 516px,#63ff9c 0 520px,#3effc1 0 524px,#18ffe7 0 528px,#00efff 0 532px,#00c8ff 0 536px,#00a2ff 0 540px,#007dff 0 544px,#005aff 0 548px,#0039ff 0 552px,#0013ff 0 556px,#00008f 0 756px)"></div>
<div class="hr" style="top:464px;width:755px;background:linear-gradient(90deg,#0070ff 0 4px,#008bff 0 8px,#00a7ff 0 12px,#00c0ff 0 16px,#00d6ff 0 20px,#00eaff 0 24px,#00feff 0 28px,#13ffec 0 32px,#26ffd9 0 36px,#39ffc6 0 40px,#49ffb6 0 44px,#52ffad 0 48px,#55ffaa 0 72px,#54ffab 0 76px,#4dffb2 0 80px,#41ffbe 0 84px,#32ffcd 0 88px,#22ffdd 0 92px,#11ffee 0 96px,#00fdff 0 100px,#00e8ff 0 104px,#00d3ff 0 108px,#00bdff 0 112px,#00a7ff 0 116px,#0091ff 0 120px,#007aff 0 124px,#0064ff 0 128px,#004cff 0 132px,#0035ff 0 136px,#001cff 0 140px,#0004ff 0 144px,#0000ee 0 148px,#0000e2 0 152px,#0000de 0 156px,#0000dd 0 160px,#0000dc 0 164px,#0000db 0 168px,#0000da 0 172px,#0000d9 0 176px,#0000d8 0 180px,#0000d7 0 184px,#0000d6 0 188px,#0000da 0 192px,#0000eb 0 196px,#0009ff 0 200px,#002bff 0 204px,#004dff 0 208px,#006fff 0 212px,#008fff 0 216px,#00adff 0 220px,#00c8ff 0 224px,#00e0ff 0 228px,#00f7ff 0 232px,#0afff5 0 236px,#1affe5 0 240px,#29ffd6 0 244px,#37ffc8 0 248px,#40ffbf 0 252px,#43ffbc 0 256px,#44ffbb 0 260px,#46ffb9 0 264px,#47ffb8 0 268px,#49ffb6 0 272px,#48ffb7 0 276px,#42ffbd 0 280px,#37ffc8 0 284px,#29ffd6 0 288px,#1cffe3 0 292px,#0cfff3 0 296px,#00f7ff 0 300px,#00e1ff 0 304px,#00cbff 0 308px,#00b4ff 0 312px,#009eff 0 316px,#008fff 0 320px,#006dff 0 324px,#005bff 0 328px,#0045ff 0 332px,#002fff 0 336px,#0018ff 0 340px,#0002ff 0 344px,#0000ec 0 348px,#0000dc 0 352px,#0000d6 0 356px,#0000d5 0 400px,#0000db 0 404px,#0000ec 0 408px,#0006ff 0 412px,#0022ff 0 416px,#003dff 0 420px,#0057ff 0 424px,#006eff 0 428px,#0084ff 0 432px,#0099ff 0 436px,#00acff 0 440px,#00bdff 0 444px,#00cdff 0 448px,#00dcff 0 452px,#00e8ff 0 456px,#00f1ff 0 460px,#00f9ff 0 464px,#01fffe 0 468px,#08fff7 0 472px,#0dfff2 0 476px,#0ffff0 0 492px,#3dffc2 0 496px,#38ffc7 0 500px,#2cffd3 0 504px,#19ffe6 0 508px,#01fffe 0 512px,#00e9ff 0 516px,#00d3ff 0 520px,#00bcff 0 524px,#00a4ff 0 528px,#008cff 0 532px,#0074ff 0 536px,#005eff 0 540px,#004aff 0 544px,#0035ff 0 548px,#001dff 0 552px,#0000fe 0 556px,#00008f 0 756px)"></div>
<div class="hr" style="top:482px;width:755px;background:linear-gradient(90deg,#0036ff 0 4px,#003cff 0 8px,#0042ff 0 12px,#0048ff 0 16px,#004eff 0 20px,#0055ff 0 24px,#005bff 0 28px,#0061ff 0 32px,#0065ff 0 36px,#0069ff 0 40px,#006bff 0 44px,#006dff 0 104px,#006cff 0 108px,#0068ff 0 112px,#005eff 0 116px,#0051ff 0 120px,#0043ff 0 124px,#0035ff 0 128px,#0026ff 0 132px,#0017ff 0 136px,#0007ff 0 140px,#0000f6 0 144px,#0000e7 0 148px,#0000d8 0 152px,#0000cf 0 156px,#0000cb 0 196px,#0000cd 0 200px,#0000d3 0 204px,#0000dd 0 208px,#0000ea 0 212px,#0000f6 0 216px,#0003ff 0 220px,#000fff 0 224px,#001bff 0 228px,#0028ff 0 232px,#0034ff 0 236px,#0040ff 0 240px,#004bff 0 244px,#0054ff 0 248px,#005dff 0 252px,#0064ff 0 256px,#006aff 0 260px,#006dff 0 292px,#006cff 0 296px,#0069ff 0 300px,#005fff 0 304px,#0052ff 0 308px,#0045ff 0 312px,#0037ff 0 316px,#002eff 0 320px,#001dff 0 324px,#0014ff 0 328px,#000aff 0 332px,#0000ff 0 336px,#0000f5 0 340px,#0000ea 0 344px,#0000e0 0 348px,#0000d6 0 352px,#0000cc 0 356px,#0000c4 0 360px,#0000c1 0 396px,#0000c4 0 400px,#0000cc 0 404px,#0000d6 0 408px,#0000e1 0 412px,#0000ec 0 416px,#0000f7 0 420px,#0002ff 0 424px,#000dff 0 428px,#0017ff 0 432px,#0021ff 0 436px,#002bff 0 440px,#0034ff 0 444px,#003eff 0 448px,#0047ff 0 452px,#004dff 0 456px,#004fff 0 492px,#0060ff 0 496px,#005eff 0 500px,#005aff 0 504px,#0055ff 0 508px,#004eff 0 512px,#0045ff 0 516px,#003dff 0 520px,#0034ff 0 524px,#002bff 0 528px,#0021ff 0 532px,#0018ff 0 536px,#000fff 0 540px,#0005ff 0 544px,#0000fa 0 548px,#0000ef 0 552px,#0000df 0 556px,#00008f 0 756px)"></div>
<div class="hr" style="top:500px;width:755px;background:linear-gradient(90deg,#0000eb 0 4px,#0000ed 0 8px,#0000ef 0 12px,#0000f1 0 16px,#0000f5 0 20px,#0000fc 0 24px,#0004ff 0 28px,#000cff 0 32px,#0014ff 0 36px,#001cff 0 40px,#0024ff 0 44px,#002dff 0 48px,#0034ff 0 52px,#003cff 0 56px,#0043ff 0 60px,#0049ff 0 64px,#004fff 0 68px,#0056ff 0 72px,#005cff 0 76px,#0061ff 0 80px,#0063ff 0 128px,#0060ff 0 132px,#0057ff 0 136px,#004aff 0 140px,#003cff 0 144px,#002dff 0 148px,#001cff 0 152px,#000aff 0 156px,#0000f6 0 160px,#0000e3 0 164px,#0000d4 0 168px,#0000cd 0 172px,#0000cb 0 204px,#0000cd 0 208px,#0000d3 0 212px,#0000dd 0 216px,#0000e7 0 220px,#0000f1 0 224px,#0000fb 0 228px,#0006ff 0 232px,#0011ff 0 236px,#001dff 0 240px,#0029ff 0 244px,#0035ff 0 248px,#0040ff 0 252px,#004bff 0 256px,#0055ff 0 260px,#005eff 0 264px,#0062ff 0 268px,#0063ff 0 304px,#0060ff 0 308px,#0057ff 0 312px,#004aff 0 316px,#0041ff 0 320px,#002bff 0 324px,#0021ff 0 328px,#0014ff 0 332px,#0008ff 0 336px,#0000fb 0 340px,#0000f0 0 344px,#0000e4 0 348px,#0000d8 0 352px,#0000cd 0 356px,#0000c5 0 360px,#0000c1 0 400px,#0000c3 0 404px,#0000c9 0 408px,#0000d1 0 412px,#0000da 0 416px,#0000e3 0 420px,#0000ec 0 424px,#0000f5 0 428px,#0000fe 0 432px,#0008ff 0 436px,#0010ff 0 440px,#0018ff 0 444px,#0020ff 0 448px,#0027ff 0 452px,#002fff 0 456px,#0036ff 0 460px,#003aff 0 464px,#003bff 0 492px,#004cff 0 496px,#0049ff 0 500px,#0045ff 0 504px,#003fff 0 508px,#0037ff 0 512px,#0030ff 0 516px,#0028ff 0 520px,#0020ff 0 524px,#0017ff 0 528px,#000dff 0 532px,#0004ff 0 536px,#0000fa 0 540px,#0000f0 0 544px,#0000e6 0 548px,#0000db 0 552px,#0000cd 0 556px,#00008f 0 756px)"></div>
<div class="hr" style="top:518px;width:755px;background:linear-gradient(90deg,#0052ff 0 4px,#004aff 0 8px,#0041ff 0 12px,#0039ff 0 16px,#0033ff 0 20px,#0031ff 0 40px,#0032ff 0 44px,#0038ff 0 48px,#0045ff 0 52px,#0057ff 0 56px,#006fff 0 60px,#008aff 0 64px,#00a8ff 0 68px,#00c7ff 0 72px,#00e6ff 0 76px,#04fffb 0 80px,#1dffe2 0 84px,#32ffcd 0 88px,#46ffb9 0 92px,#58ffa7 0 96px,#68ff97 0 100px,#75ff8a 0 104px,#7fff80 0 108px,#85ff7a 0 112px,#87ff78 0 128px,#86ff79 0 132px,#80ff7f 0 136px,#73ff8c 0 140px,#63ff9c 0 144px,#52ffad 0 148px,#3dffc2 0 152px,#26ffd9 0 156px,#0dfff2 0 160px,#00f0ff 0 164px,#00d2ff 0 168px,#00b2ff 0 172px,#0094ff 0 176px,#0079ff 0 180px,#0060ff 0 184px,#004aff 0 188px,#003eff 0 192px,#003bff 0 224px,#003fff 0 228px,#004fff 0 232px,#006bff 0 236px,#008dff 0 240px,#00b3ff 0 244px,#00d7ff 0 248px,#00f6ff 0 252px,#12ffed 0 256px,#29ffd6 0 260px,#3fffc0 0 264px,#54ffab 0 268px,#66ff99 0 272px,#76ff89 0 276px,#82ff7d 0 280px,#87ff78 0 288px,#83ff7c 0 292px,#77ff88 0 296px,#64ff9b 0 300px,#4fffb0 0 304px,#39ffc6 0 308px,#25ffda 0 312px,#16ffe9 0 316px,#0cfff3 0 320px,#0090ff 0 324px,#007cff 0 328px,#0065ff 0 332px,#0052ff 0 336px,#0041ff 0 340px,#0031ff 0 344px,#0021ff 0 348px,#0012ff 0 352px,#0006ff 0 356px,#0000fe 0 360px,#0000fc 0 364px,#0000fb 0 368px,#0000fa 0 372px,#0000f9 0 376px,#0000f8 0 380px,#0000f7 0 384px,#0000f6 0 388px,#0000f5 0 396px,#0000f8 0 400px,#0002ff 0 404px,#000eff 0 408px,#001bff 0 412px,#0028ff 0 416px,#0035ff 0 420px,#0043ff 0 424px,#0053ff 0 428px,#0064ff 0 432px,#0076ff 0 436px,#0088ff 0 440px,#0097ff 0 444px,#009eff 0 448px,#00a1ff 0 456px,#00a2ff 0 460px,#00a3ff 0 464px,#00a4ff 0 468px,#00a5ff 0 472px,#00a6ff 0 480px,#00a7ff 0 484px,#00a8ff 0 488px,#00a9ff 0 492px,#00afff 0 496px,#00abff 0 500px,#00a7ff 0 504px,#00a1ff 0 508px,#0098ff 0 512px,#0089ff 0 516px,#0078ff 0 520px,#0066ff 0 524px,#0056ff 0 528px,#0048ff 0 532px,#003bff 0 536px,#002dff 0 540px,#0020ff 0 544px,#0013ff 0 548px,#0006ff 0 552px,#0000f2 0 556px,#00008f 0 756px)"></div>
<div class="hr" style="top:536px;width:755px;background:linear-gradient(90deg,#e10000 0 4px,#ff1f00 0 8px,#ff6700 0 12px,#ffae00 0 16px,#ffee00 0 20px,#dbff24 0 24px,#abff54 0 28px,#7fff80 0 32px,#55ffaa 0 36px,#2dffd2 0 40px,#05fffa 0 44px,#00deff 0 48px,#00c6ff 0 52px,#00bdff 0 64px,#00c6ff 0 68px,#00deff 0 72px,#05fffa 0 76px,#2dffd2 0 80px,#55ffaa 0 84px,#7fff80 0 88px,#abff54 0 92px,#dbff24 0 96px,#ffee00 0 100px,#ffaf00 0 104px,#ff7000 0 108px,#ff3300 0 112px,#f90000 0 116px,#c30000 0 120px,#990000 0 124px,#840000 0 128px,#800000 0 148px,#8d0000 0 152px,#b10000 0 156px,#e80000 0 160px,#ff2400 0 164px,#ff6000 0 168px,#ffa000 0 172px,#ffdd00 0 176px,#ebff14 0 180px,#beff41 0 184px,#93ff6c 0 188px,#69ff96 0 192px,#42ffbd 0 196px,#1dffe2 0 200px,#00fbff 0 204px,#00ddff 0 208px,#00c7ff 0 212px,#00beff 0 216px,#00bdff 0 224px,#00c2ff 0 228px,#00d2ff 0 232px,#00efff 0 236px,#1effe1 0 240px,#62ff9d 0 244px,#b3ff4c 0 248px,#fffd00 0 252px,#ffb900 0 256px,#ff7c00 0 260px,#ff4200 0 264px,#ff0d00 0 268px,#df0000 0 272px,#bc0000 0 276px,#a10000 0 280px,#8e0000 0 284px,#840000 0 288px,#800000 0 300px,#8c0000 0 304px,#aa0000 0 308px,#d40000 0 312px,#fe0000 0 316px,#ff1a00 0 320px,#c3ff3c 0 324px,#a8ff57 0 328px,#86ff79 0 332px,#62ff9d 0 336px,#3effc1 0 340px,#1cffe3 0 344px,#00faff 0 348px,#00dbff 0 352px,#00bdff 0 356px,#00a3ff 0 360px,#008cff 0 364px,#0075ff 0 368px,#0063ff 0 372px,#005aff 0 376px,#0059ff 0 396px,#005bff 0 400px,#0067ff 0 404px,#007fff 0 408px,#009eff 0 412px,#00bbff 0 416px,#00d6ff 0 420px,#00efff 0 424px,#08fff7 0 428px,#1effe1 0 432px,#34ffcb 0 436px,#49ffb6 0 440px,#5dffa2 0 444px,#6eff91 0 448px,#7eff81 0 452px,#8eff71 0 456px,#9bff64 0 460px,#a3ff5c 0 464px,#a5ff5a 0 480px,#a4ff5b 0 484px,#9dff62 0 488px,#96ff69 0 492px,#7cff83 0 496px,#69ff96 0 500px,#4fffb0 0 504px,#33ffcc 0 508px,#17ffe8 0 512px,#00fbff 0 516px,#00e1ff 0 520px,#00c8ff 0 524px,#00b0ff 0 528px,#0098ff 0 532px,#0081ff 0 536px,#006aff 0 540px,#0054ff 0 544px,#0040ff 0 548px,#002bff 0 552px,#000dff 0 556px,#00008f 0 756px)"></div>
<div class="hr" style="top:554px;width:755px;background:linear-gradient(90deg,#800000 0 20px,#820000 0 24px,#920000 0 28px,#be0000 0 32px,#f70000 0 36px,#ff3300 0 40px,#ff7000 0 44px,#ffb000 0 48px,#fff100 0 52px,#d0ff2f 0 56px,#98ff67 0 60px,#64ff9b 0 64px,#34ffcb 0 68px,#08fff7 0 72px,#00e0ff 0 76px,#00c0ff 0 80px,#00aeff 0 84px,#00a9ff 0 92px,#00b2ff 0 96px,#00caff 0 100px,#00f0ff 0 104px,#1fffe0 0 108px,#52ffad 0 112px,#8bff74 0 116px,#c9ff36 0 120px,#fff300 0 124px,#ffaf00 0 128px,#ff6c00 0 132px,#ff2b00 0 136px,#ed0000 0 140px,#b70000 0 144px,#900000 0 148px,#820000 0 152px,#800000 0 168px,#880000 0 172px,#a60000 0 176px,#db0000 0 180px,#ff1a00 0 184px,#ff5a00 0 188px,#ff9900 0 192px,#ffd600 0 196px,#edff12 0 200px,#b3ff4c 0 204px,#7dff82 0 208px,#4bffb4 0 212px,#20ffdf 0 216px,#00fdff 0 220px,#00e2ff 0 224px,#00cdff 0 228px,#00c1ff 0 232px,#00bdff 0 240px,#00c6ff 0 244px,#00deff 0 248px,#0bfff4 0 252px,#44ffbb 0 256px,#86ff79 0 260px,#c8ff37 0 264px,#fff600 0 268px,#ffb800 0 272px,#ff7700 0 276px,#ff3200 0 280px,#f20000 0 284px,#bc0000 0 288px,#960000 0 292px,#830000 0 296px,#800000 0 320px,#ffb900 0 324px,#ffd700 0 328px,#fffd00 0 332px,#ddff22 0 336px,#bdff42 0 340px,#9eff61 0 344px,#7bff84 0 348px,#55ffaa 0 352px,#2fffd0 0 356px,#0cfff3 0 360px,#00ecff 0 364px,#00ceff 0 368px,#00b2ff 0 372px,#0098ff 0 376px,#0081ff 0 380px,#0072ff 0 384px,#006dff 0 400px,#006eff 0 404px,#0075ff 0 408px,#0086ff 0 412px,#009eff 0 416px,#00b7ff 0 420px,#00d0ff 0 424px,#00e8ff 0 428px,#02fffd 0 432px,#19ffe6 0 436px,#2fffd0 0 440px,#44ffbb 0 444px,#59ffa6 0 448px,#6dff92 0 452px,#80ff7f 0 456px,#92ff6d 0 460px,#9fff60 0 464px,#a5ff5a 0 484px,#a3ff5c 0 488px,#9fff60 0 492px,#83ff7c 0 496px,#6fff90 0 500px,#52ffad 0 504px,#33ffcc 0 508px,#17ffe8 0 512px,#00fbff 0 516px,#00e1ff 0 520px,#00c8ff 0 524px,#00b0ff 0 528px,#0098ff 0 532px,#0081ff 0 536px,#006aff 0 540px,#0054ff 0 544px,#0040ff 0 548px,#002bff 0 552px,#000dff 0 556px,#00008f 0 756px)"></div>
<!-- axes -->
<div class="tk" style="left:104px;top:230px;width:3px;height:86px"></div>
<div class="tk" style="left:105px;top:316px;width:3px;height:171px"></div>
<div class="tk" style="left:106px;top:487px;width:3px;height:86px"></div>
<div class="tk" style="left:106px;top:571px;width:756px;height:3px"></div>
<div class="tk" style="left:94px;top:259px;width:11px;height:3px"></div>
<div class="tk" style="left:94px;top:323px;width:11px;height:3px"></div>
<div class="tk" style="left:94px;top:387px;width:11px;height:3px"></div>
<div class="tk" style="left:94px;top:452px;width:11px;height:3px"></div>
<div class="tk" style="left:94px;top:516px;width:12px;height:3px"></div>
<div class="tk" style="left:209px;top:573px;width:3px;height:8px"></div>
<div class="tk" style="left:315px;top:573px;width:3px;height:8px"></div>
<div class="tk" style="left:421px;top:573px;width:3px;height:8px"></div>
<div class="tk" style="left:526px;top:573px;width:3px;height:8px"></div>
<div class="tk" style="left:632px;top:573px;width:3px;height:8px"></div>
<div class="tk" style="left:738px;top:573px;width:3px;height:8px"></div>
<div class="tk" style="left:844px;top:573px;width:3px;height:8px"></div>
<div class="pl" style="left:45px;top:254px;width:40px;text-align:right;font-size:17.6px">550</div>
<div class="pl" style="left:45px;top:318px;width:40px;text-align:right;font-size:17.6px">500</div>
<div class="pl" style="left:45px;top:383px;width:40px;text-align:right;font-size:17.6px">450</div>
<div class="pl" style="left:45px;top:447px;width:40px;text-align:right;font-size:17.6px">400</div>
<div class="pl" style="left:45px;top:512px;width:40px;text-align:right;font-size:17.6px">350</div>
<div class="pl" style="left:180px;top:586.5px;width:60px;text-align:center;font-size:17.6px">50</div>
<div class="pl" style="left:286px;top:586.5px;width:60px;text-align:center;font-size:17.6px">100</div>
<div class="pl" style="left:392px;top:586.5px;width:60px;text-align:center;font-size:17.6px">150</div>
<div class="pl" style="left:497px;top:586.5px;width:60px;text-align:center;font-size:17.6px">200</div>
<div class="pl" style="left:603px;top:586.5px;width:60px;text-align:center;font-size:17.6px">250</div>
<div class="pl" style="left:709px;top:586.5px;width:60px;text-align:center;font-size:17.6px">300</div>
<div class="pl" style="left:815px;top:586.5px;width:60px;text-align:center;font-size:17.6px">350</div>
<div class="pl" style="left:384px;top:605.5px;width:200px;text-align:center;font-size:16.5px">y-position [nm]</div>
<div class="pl" id="yl" style="left:-60px;top:410px;width:200px;text-align:center;font-size:16.6px;transform:rotate(-90deg);transform-origin:50% 50%">Wavelength [nm]</div>
<!-- colorbar -->
<div class="abs" style="left:914px;top:298px;width:29px;height:265px;background:linear-gradient(#800000 0,#800000 27px,#ff0000 57px,#ffff00 116px,#00ffff 176px,#0000ff 235px,#00008f 265px)"></div>
<div class="pl" style="left:897px;top:262px;width:60px;text-align:center;font-size:19.2px">0.74</div>
<div class="pl" style="left:888px;top:580px;font-size:19.2px">6.93x10</div>
<div class="pl" style="left:957px;top:573px;font-size:10.5px">-8</div>
<div class="pl" id="dl" style="left:856.5px;top:440px;width:200px;text-align:center;font-size:19.7px;transform:rotate(-90deg);transform-origin:50% 50%">Density [m^{-3}]</div>
<!-- status -->
<div class="abs" style="left:22px;top:673px;line-height:16px;white-space:nowrap;color:#111">/home/rod/oghma/oghma8.0/outcoupling/photons_escape_prob_yl.csv</div>
<svg class="abs" style="left:988px;top:676px" width="16" height="16" viewBox="0 0 16 16"><g fill="#b4b4b4">
<rect x="12" y="3" width="1" height="1"/><rect x="9" y="6" width="1" height="1"/><rect x="12" y="6" width="1" height="1"/>
<rect x="6" y="9" width="1" height="1"/><rect x="9" y="9" width="1" height="1"/><rect x="12" y="9" width="1" height="1"/>
<rect x="3" y="12" width="1" height="1"/><rect x="6" y="12" width="1" height="1"/><rect x="9" y="12" width="1" height="1"/><rect x="12" y="12" width="1" height="1"/></g></svg>
</div></body></html>
